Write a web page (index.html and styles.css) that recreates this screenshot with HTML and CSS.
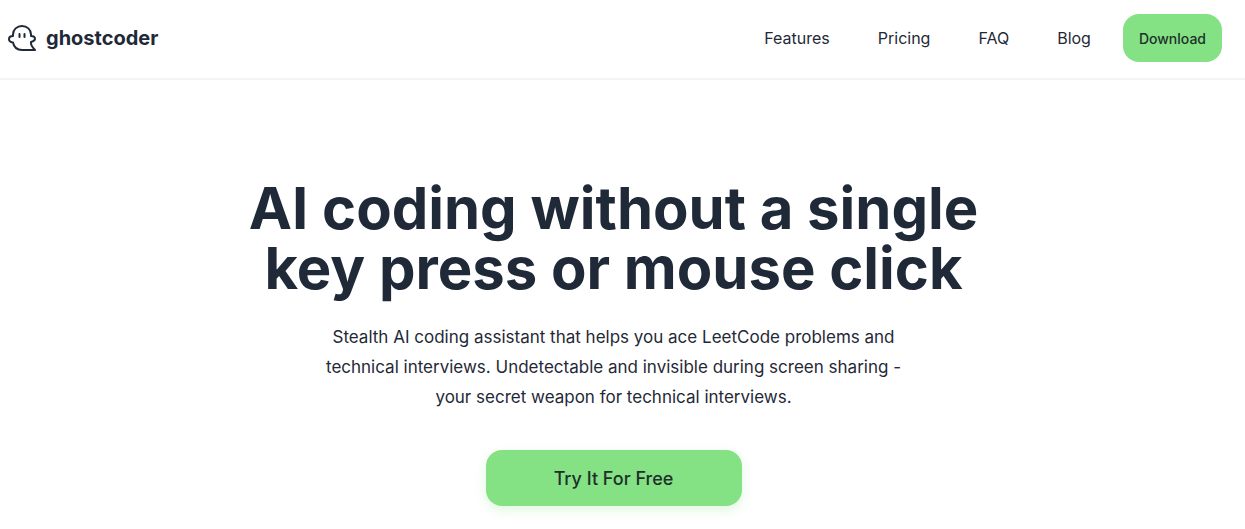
FILE: index.html
```html
<!DOCTYPE html>
<html lang="en">
<head>
<meta charset="utf-8">
<meta name="viewport" content="width=device-width, initial-scale=1">
<title>ghostcoder</title>
<link rel="stylesheet" href="styles.css">
</head>
<body>
<header class="header">
  <a class="brand" href="#">
    <svg class="brand-icon" viewBox="0 0 30 28" fill="none" stroke="currentColor" stroke-width="2" stroke-linecap="round" stroke-linejoin="round" aria-hidden="true">
      <path d="M6 12V10.500C6 5.500 10 2 15 2s9 3.500 9 8.500V12c2 0 4 .8 4 2.800s-2 2.700-4 3.200c-.5 3 1 5 4 8H15c-5 0-8-2.500-9-7.500-2-.3-4-1.200-4-3.300C2 13 4 12 6 12z"/>
      <path d="M12.500 10v3M17.500 10v3"/>
    </svg>
    <span>ghostcoder</span>
  </a>
  <nav class="nav">
    <a href="#">Features</a>
    <a href="#">Pricing</a>
    <a href="#">FAQ</a>
    <a href="#">Blog</a>
  </nav>
  <button class="download" type="button">Download</button>
</header>
<main class="hero">
  <h1 class="title">AI coding without a single key press or mouse click</h1>
  <p class="lead">Stealth AI coding assistant that helps you ace LeetCode problems and technical interviews. Undetectable and invisible during screen sharing - your secret weapon for technical interviews.</p>
  <button class="cta" type="button">Try It For Free</button>
</main>
</body>
</html>
```
FILE: styles.css
```css
* { box-sizing: border-box; }
body { margin: 0; background: #fff; color: #1f2937; font-family: Inter, "Liberation Sans", sans-serif; }
a { color: inherit; text-decoration: none; }
button { border: 0; font: inherit; color: #1f2f2b; background: #84e184; cursor: pointer; }
.header { display: flex; align-items: center; height: 80px; padding: 0 23px 2px 7px; border-bottom: 2px solid #f3f4f6; }
.brand { display: flex; align-items: center; gap: 9px; font-size: 20px; font-weight: 700; }
.brand-icon { width: 30px; height: 28px; }
.nav { display: flex; gap: 48px; margin-left: auto; font-size: 16px; }
.download { height: 48px; margin-left: 32px; padding: 0 16px; border-radius: 16px; font-size: 14px; font-weight: 500; }
.hero { display: flex; flex-direction: column; align-items: center; padding: 98px 32px 24px 14px; }
.title { max-width: 768px; margin: 0; font-size: 58px; line-height: 60px; font-weight: 700; text-align: center; }
.lead { max-width: 600px; margin: 24px 0 0; font-size: 17px; line-height: 30px; text-align: center; }
.cta { width: 256px; height: 56px; margin-top: 38px; border-radius: 16px; font-size: 18px; font-weight: 500; box-shadow: 0 4px 12px #84e18440; }
```
